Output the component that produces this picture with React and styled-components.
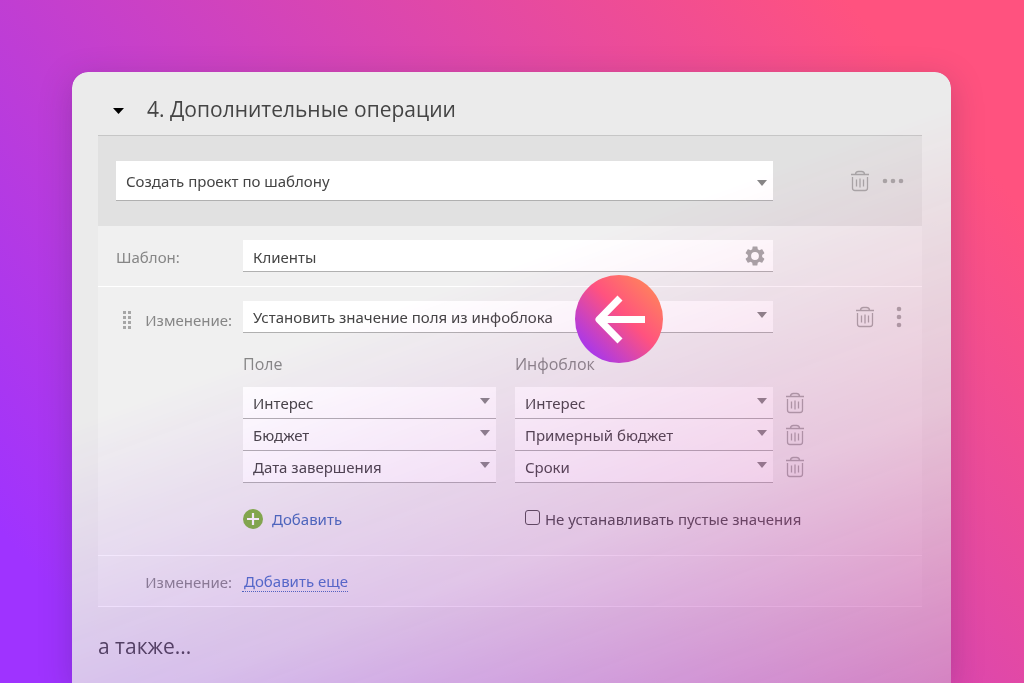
import React, { useState } from "react";
import styled, { createGlobalStyle } from "styled-components";

const GlobalStyle = createGlobalStyle`
  * {
    box-sizing: border-box;
  }

  body {
    margin: 0;
    font-family: "Noto Sans", "Open Sans", sans-serif;
    font-size: 15px;
    color: #444;
  }

  button, input, select {
    margin: 0;
    font: inherit;
    color: inherit;
  }
`;

const Page = styled.div`
  display: flex;
  height: 100vh;
  padding: 72px 73px 0 72px;
  overflow: hidden;
  background: linear-gradient(50deg, #9f33ff 8%, #ff527f 89%);
`;

const Frame = styled.main`
  position: relative;
  display: flex;
  flex: 1;
  min-width: 0;
  border-radius: 16px 16px 0 0;
  background: rgba(80, 50, 150, 0.14);
  box-shadow: 0 8px 32px rgba(50, 30, 80, 0.25);
`;

const Card = styled.div`
  flex: 1;
  min-width: 0;
  padding: 0 29px 0 26px;
  border-radius: 16px 16px 0 0;
  background: #ebebeb;
  overflow: hidden;
  mask-image: linear-gradient(160deg, #000 38%, rgba(0, 0, 0, 0.76) 70%, rgba(0, 0, 0, 0.38) 100%);
`;

const Header = styled.header`
  display: flex;
  align-items: center;
  gap: 23px;
  height: 64px;
  padding: 10px 15px 0;
  border-bottom: 1px solid #c6c6c6;
`;

const Title = styled.h2`
  margin: 0;
  font-family: "Open Sans", sans-serif;
  font-size: 21px;
  font-weight: 400;
  line-height: 30px;
`;

const IconButton = styled.button`
  display: flex;
  padding: 0;
  border: 0;
  background: none;
  color: ${({ $color }) => $color || "#a6a6a6"};
  cursor: pointer;
`;

const ActionBar = styled.section`
  display: grid;
  grid-template-columns: 1fr 149px;
  padding: 25px 0 25px 18px;
  background: #e1e1e1;
`;

const Row = styled.section`
  display: grid;
  grid-template-columns: 145px 1fr 149px;
  padding: ${({ $padding }) => $padding || "14px 0"};
  background: #f0f0f0;
  border-bottom: 1px solid #fff;
`;

const RowLabel = styled.label`
  display: flex;
  align-items: center;
  justify-content: ${({ $end }) => ($end ? "flex-end" : "flex-start")};
  gap: 14px;
  height: ${({ $height }) => $height || "32px"};
  padding: 2px 11px 0 18px;
  color: #868686;
`;

const Actions = styled.div`
  display: flex;
  align-items: center;
  justify-content: flex-end;
  gap: ${({ $gap }) => $gap || "12px"};
  height: ${({ $height }) => $height || "32px"};
  padding-right: 18px;
`;

const Field = styled.div`
  position: relative;
  display: flex;
  min-width: 0;
  height: ${({ $height }) => $height || "32px"};
  background: #fff;
  border-bottom: 1px solid #b0b0b0;
`;

const Select = styled.select`
  appearance: none;
  width: 100%;
  padding: 1px 30px 0 10px;
  border: 0;
  border-radius: 0;
  background: none;
  outline: none;
`;

const TextInput = styled.input`
  width: 100%;
  padding: 3px 40px 0 10px;
  border: 0;
  background: none;
  outline: none;
`;

const Caret = styled.span`
  position: absolute;
  top: ${({ $top }) => $top || "11px"};
  right: 6px;
  border: 5px solid transparent;
  border-top: 6px solid #868686;
  border-bottom: 0;
  pointer-events: none;
`;

const FieldIcon = styled.div`
  position: absolute;
  top: 6px;
  right: 8px;
`;

const Mapping = styled.div`
  display: grid;
  grid-template-columns: 49fr 50fr;
  column-gap: 19px;
  margin-top: 16px;
`;

const ColumnTitle = styled.div`
  height: 38px;
  font-family: "Open Sans", sans-serif;
  font-size: 16px;
  line-height: 30px;
  color: #868686;
`;

const FieldWithDelete = styled.div`
  display: flex;
  align-items: center;
  margin-right: -32px;

  ${Field} {
    flex: 1;
    margin-right: 12px;
  }
`;

const MappingFooter = styled.div`
  display: grid;
  grid-template-columns: minmax(0, 49fr) minmax(0, 50fr);
  column-gap: 19px;
  align-items: center;
  padding: 26px 0 12px;
`;

const AddButton = styled.button`
  display: flex;
  align-items: center;
  gap: 9px;
  padding: 0;
  border: 0;
  background: none;
  color: #3f6cb8;
  cursor: pointer;
`;

const CheckLabel = styled.label`
  display: flex;
  align-items: center;
  gap: 5px;
  padding-left: 10px;
  white-space: nowrap;
`;

const Checkbox = styled.input`
  appearance: none;
  flex: none;
  width: 15px;
  height: 15px;
  margin: 0 0 4px;
  border: 1px solid #4a4a4a;
  border-radius: 3px;

  &:checked {
    background: #4a4a4a;
  }
`;

const MoreLink = styled.a`
  justify-self: start;
  align-self: center;
  margin-left: -1px;
  padding: 1px 0 0 2px;
  border-bottom: 1px dotted #3f6cb8;
  color: #4472c4;
  line-height: 20px;
  text-decoration: none;
`;

const Outro = styled.h2`
  margin: 24px 0 0;
  font-family: "Open Sans", sans-serif;
  font-size: 21px;
  font-weight: 400;
  line-height: 30px;
`;

const Pointer = styled.svg`
  position: absolute;
  top: 203px;
  left: 503px;
  width: 88px;
  height: 88px;
`;

const TrashIcon = () => (
  <svg width="20" height="22" viewBox="0 0 20 22" fill="none" stroke="currentColor" strokeWidth="1.3">
    <path d="M1 4.5h18M5.500 4.500C5.500 2.300 7 1.500 8.500 1.500h3c1.500 0 3 .8 3 3" />
    <path d="M2.500 7v11a2.500 2.500 0 0 0 2.500 2.500h10a2.500 2.500 0 0 0 2.500-2.500V7M6.500 9.500v7M10 8.500v9M13.500 9.500v7" />
  </svg>
);

const DotsIcon = ({ vertical }) => (
  <svg width={vertical ? 10 : 22} height={vertical ? 22 : 10} fill="currentColor">
    {[3, 11, 19].map(p => (
      <circle key={p} cx={vertical ? 5 : p} cy={vertical ? p : 5} r="2.300" />
    ))}
  </svg>
);

const GearIcon = () => (
  <svg width="20" height="20" viewBox="2 2 20 20" fill="currentColor">
    <path d="M19.140 12.940c.04-.3.06-.61.06-.94 0-.32-.02-.64-.07-.94l2.030-1.580c.18-.14.23-.41.12-.61l-1.920-3.320c-.12-.22-.37-.29-.59-.22l-2.390.96c-.5-.38-1.030-.7-1.620-.94l-.36-2.540c-.04-.24-.24-.41-.48-.41h-3.840c-.24 0-.43.17-.47.41l-.36 2.540c-.59.24-1.130.57-1.620.94l-2.390-.96c-.22-.08-.47 0-.59.22L2.740 8.870c-.12.21-.08.47.12.61l2.030 1.580c-.05.3-.09.63-.09.94s.02.64.07.94l-2.030 1.580c-.18.14-.23.41-.12.61l1.920 3.320c.12.22.37.29.59.22l2.390-.96c.5.38 1.030.7 1.620.94l.36 2.540c.05.24.24.41.48.41h3.840c.24 0 .44-.17.47-.41l.36-2.540c.59-.24 1.130-.56 1.620-.94l2.390.96c.22.08.47 0 .59-.22l1.920-3.320c.12-.22.07-.47-.12-.61l-2.010-1.580zM12 15.900a3.900 3.900 0 1 1 0-7.800 3.900 3.900 0 0 1 0 7.800z" />
  </svg>
);

const GripIcon = () => (
  <svg width="8" height="18" fill="#a6a6a6">
    {[0, 5, 10, 15].map(y => (
      <path key={y} d={`M0 ${y}h3v3h-3zM5 ${y}h3v3h-3z`} />
    ))}
  </svg>
);

const PlusIcon = () => (
  <svg width="20" height="20">
    <circle cx="10" cy="10" r="10" fill="#7db53a" />
    <path d="M10 4v12M4 10h12" stroke="#fff" strokeWidth="2.200" />
  </svg>
);

const Dropdown = ({ id, label, value, height, caretTop }) => (
  <Field $height={height}>
    <Select id={id} aria-label={label} defaultValue={value}>
      <option>{value}</option>
    </Select>
    <Caret $top={caretTop} />
  </Field>
);

const mappings = [
  { field: "Интерес", block: "Интерес" },
  { field: "Бюджет", block: "Примерный бюджет" },
  { field: "Дата завершения", block: "Сроки" },
];

const App = () => {
  const [skipEmpty, setSkipEmpty] = useState(false);

  return (
    <Page>
      <GlobalStyle />
      <Frame>
        <Card>
          <Header>
            <IconButton $color="#000" aria-label="Свернуть">
              <svg width="11" height="10" fill="currentColor">
                <path d="M0 4h11L5.500 10z" />
              </svg>
            </IconButton>
            <Title>4. Дополнительные операции</Title>
          </Header>

          <ActionBar>
            <Dropdown label="Операция" value="Создать проект по шаблону" height="40px" caretTop="19px" />
            <Actions $height="40px">
              <IconButton aria-label="Удалить"><TrashIcon /></IconButton>
              <IconButton aria-label="Ещё"><DotsIcon /></IconButton>
            </Actions>
          </ActionBar>

          <Row>
            <RowLabel htmlFor="template">Шаблон:</RowLabel>
            <Field>
              <TextInput id="template" defaultValue="Клиенты" />
              <FieldIcon>
                <IconButton aria-label="Настройки"><GearIcon /></IconButton>
              </FieldIcon>
            </Field>
          </Row>

          <Row>
            <RowLabel htmlFor="change" $end $height="36px">
              <GripIcon />
              Изменение:
            </RowLabel>
            <div>
              <Dropdown id="change" value="Установить значение поля из инфоблока" />
              <Mapping>
                <ColumnTitle>Поле</ColumnTitle>
                <ColumnTitle>Инфоблок</ColumnTitle>
                {mappings.map(({ field, block }) => (
                  <React.Fragment key={field}>
                    <Dropdown label="Поле" value={field} />
                    <FieldWithDelete>
                      <Dropdown label="Инфоблок" value={block} />
                      <IconButton aria-label="Удалить"><TrashIcon /></IconButton>
                    </FieldWithDelete>
                  </React.Fragment>
                ))}
              </Mapping>
              <MappingFooter>
                <AddButton>
                  <PlusIcon />
                  Добавить
                </AddButton>
                <CheckLabel>
                  <Checkbox
                    type="checkbox"
                    checked={skipEmpty}
                    onChange={e => setSkipEmpty(e.target.checked)}
                  />
                  Не устанавливать пустые значения
                </CheckLabel>
              </MappingFooter>
            </div>
            <Actions $gap="19px">
              <IconButton aria-label="Удалить"><TrashIcon /></IconButton>
              <IconButton aria-label="Ещё"><DotsIcon vertical /></IconButton>
            </Actions>
          </Row>

          <Row $padding="7px 0">
            <RowLabel as="span" $end $height="36px">Изменение:</RowLabel>
            <MoreLink href="#more">Добавить еще</MoreLink>
          </Row>

          <Outro>а также...</Outro>
        </Card>

        <Pointer viewBox="0 0 88 88" aria-hidden="true">
          <defs>
            <linearGradient id="pointer" x1="0.1" y1="0.9" x2="0.85" y2="0.15">
              <stop offset="0" stopColor="#a035f5" />
              <stop offset="0.600" stopColor="#ff527f" />
              <stop offset="1" stopColor="#ff7d60" />
            </linearGradient>
          </defs>
          <circle cx="44" cy="44" r="44" fill="url(#pointer)" />
          <path
            d="M45 23L24 44.500L45 66M24 44.500H70"
            fill="none"
            stroke="#fff"
            strokeWidth="7"
            strokeLinejoin="round"
          />
        </Pointer>
      </Frame>
    </Page>
  );
};

export default App;
